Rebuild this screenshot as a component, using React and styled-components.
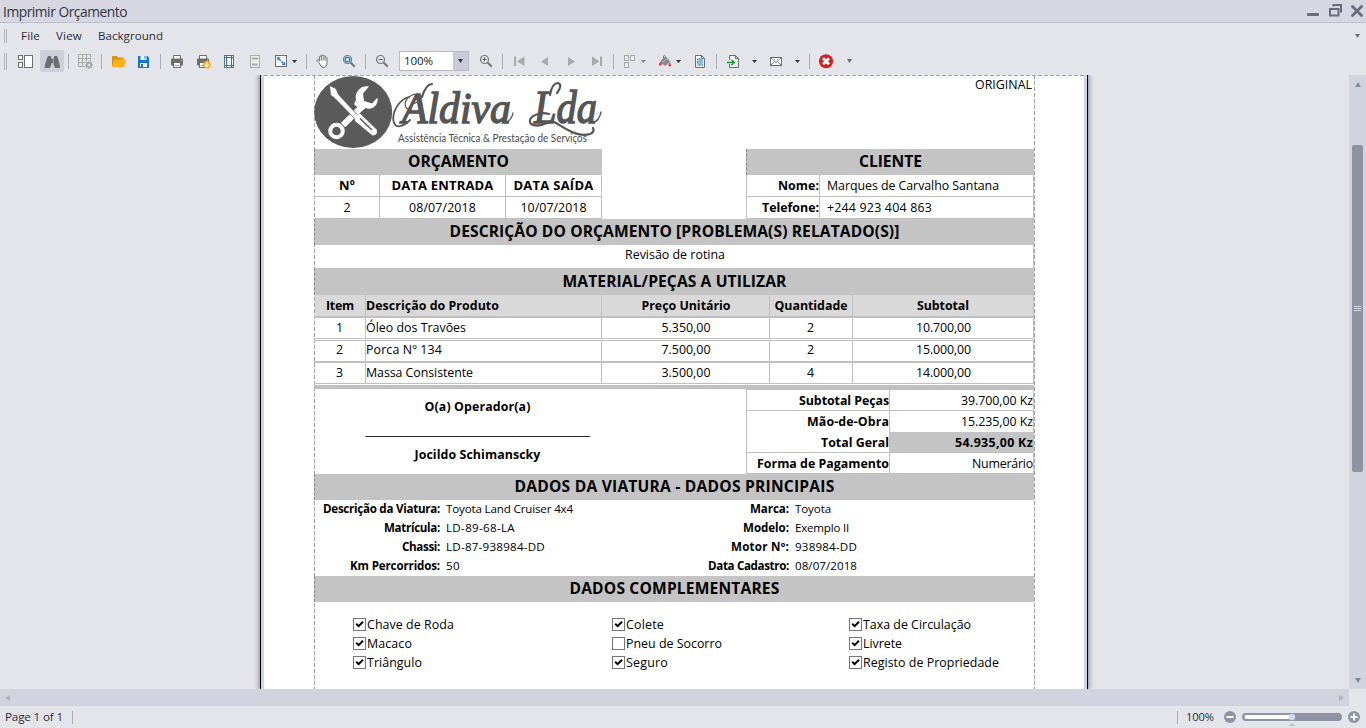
import React, { useLayoutEffect, useRef, useState } from "react";
import styled, { createGlobalStyle } from "styled-components";

const GlobalStyle = createGlobalStyle`
  * { box-sizing: border-box; }
  body { margin: 0; overflow: hidden; font-family: "Open Sans", "Noto Sans", sans-serif; }
  svg { display: block; flex: none; }
`;

const LINE = "#c0c0c0";
const BAND = "#c4c4c4";

/* ---------- text ---------- */

const Label = styled.span`
  display: inline-block;
  flex: none;
  white-space: pre;
  font-family: ${(p) => p.$font || '"Open Sans", "Noto Sans", sans-serif'};
  font-size: ${(p) => p.$size || 12.4}px;
  font-weight: ${(p) => (p.$bold ? 700 : 400)};
  line-height: 16px;
`;

function Text({ w, size, bold, font, children }) {
  const ref = useRef(null);
  const [tracking, setTracking] = useState(0);
  useLayoutEffect(() => {
    if (!w) return;
    const natural = ref.current.getBoundingClientRect().width;
    setTracking((w - natural) / String(children).length);
  }, [w, children]);
  return (
    <Label ref={ref} $size={size} $bold={bold} $font={font} style={{ letterSpacing: tracking }}>
      {children}
    </Label>
  );
}

/* ---------- window frame ---------- */

const Window = styled.div`
  width: 1366px;
  height: 728px;
  display: flex;
  flex-direction: column;
  background: #e4e5ea;
  color: #3a3a48;
  overflow: hidden;
`;

const TitleBar = styled.header`
  height: 23px;
  flex: none;
  display: flex;
  align-items: center;
  justify-content: space-between;
  padding: 0 3px 0 3px;
  background: #d6d7e0;
  border-bottom: 1px solid #bdbfcd;
`;

const TitleText = styled.span`
  display: flex;
  padding-top: 2px;
  color: #33333f;
`;

const MenuBar = styled.nav`
  height: 26px;
  flex: none;
  display: flex;
  align-items: center;
  padding-left: 4px;
  color: #2c2c38;
`;

const MenuItem = styled.span`
  display: flex;
  margin-left: ${(p) => p.$gap}px;
`;

const MenuEnd = styled.span`
  margin: 0 6px 0 auto;
`;

const Toolbar = styled.div`
  height: 26px;
  flex: none;
  display: flex;
  align-items: center;
  padding: 0 0 2px 4px;
`;

const Grip = styled.span`
  width: 3px;
  height: ${(p) => p.$h}px;
  border: solid #b2b4bd;
  border-width: 0 1px;
`;

const Tool = styled.span`
  display: flex;
  flex: none;
  width: ${(p) => p.$w || 16}px;
  height: 22px;
  margin-left: ${(p) => p.$gap || 0}px;
  align-items: center;
  justify-content: center;
  border-radius: 2px;
  background: ${(p) => (p.$active ? "#cdcfdb" : "transparent")};
`;

const Divider = styled.span`
  flex: none;
  width: 1px;
  height: ${(p) => p.$h || 15}px;
  margin-left: ${(p) => p.$gap || 0}px;
  background: #aaacb6;
`;

const ZoomBox = styled.span`
  flex: none;
  width: 70px;
  height: 20px;
  margin-left: 9px;
  display: flex;
  align-items: center;
  background: #fff;
  border: 1px solid #b8bac9;
  padding-left: 4px;
  color: #222;
`;

const ZoomDrop = styled.span`
  margin-left: auto;
  width: 15px;
  height: 18px;
  background: #c9cbd8;
  display: flex;
  align-items: center;
  justify-content: center;
`;

const Body = styled.div`
  height: 614px;
  flex: none;
  display: flex;
`;

const Viewer = styled.main`
  width: 1349px;
  height: 614px;
  display: flex;
  justify-content: flex-start;
  padding-left: 260px;
  overflow: hidden;
`;

const VScroll = styled.div`
  width: 17px;
  height: 614px;
  background: #d1d4de;
  display: flex;
  flex-direction: column;
  align-items: center;
  padding: 7px 0 6px;
`;

const VThumb = styled.div`
  width: 11px;
  height: 327px;
  margin: 58px 0 auto;
  border-radius: 2px;
  background: #8f93a1;
  display: flex;
  flex-direction: column;
  align-items: center;
  justify-content: center;
  gap: 1px;
`;

const ThumbLine = styled.span`
  width: 7px;
  height: 1px;
  background: #d4d6e0;
`;

const HScroll = styled.div`
  width: 1349px;
  height: 17px;
  flex: none;
  background: #d1d4de;
  display: flex;
  align-items: center;
  justify-content: space-between;
  padding: 0 5px;
`;

const StatusBar = styled.footer`
  height: 22px;
  flex: none;
  display: flex;
  align-items: center;
  padding: 0 6px 0 5px;
  color: #2c2c38;
`;

const StatusRight = styled.div`
  margin-left: auto;
  display: flex;
  align-items: center;
`;

/* ---------- report page ---------- */

const Sheet = styled.div`
  width: 828px;
  height: 614px;
  flex: none;
  border: solid #000;
  border-width: 0 1px;
  box-shadow: 0 0 5px 1px rgba(70, 70, 80, 0.6);
  background: #ccd5ee;
  padding: 0 3px;
`;

const dash = "#a3a3a3 0 4px, transparent 4px 6px";

const Paper = styled.div`
  height: 614px;
  background: repeating-linear-gradient(90deg, ${dash}) 0 0 / 820px 1px no-repeat, #fff;
  padding-left: 50px;
`;

const Content = styled.div`
  width: 721px;
  height: 614px;
  color: #000;
  display: flex;
  flex-direction: column;
  background: repeating-linear-gradient(180deg, ${dash}) 0 0 / 1px 100% no-repeat,
    repeating-linear-gradient(180deg, ${dash}) 720px 0 / 1px 100% no-repeat;
`;

const Top = styled.div`
  height: 74px;
  flex: none;
  display: flex;
  justify-content: space-between;
  padding-right: 3px;
`;

const CopyMark = styled.div`
  display: flex;
  align-items: flex-start;
  padding-top: 2px;
`;

const Band = styled.div`
  height: ${(p) => p.$h || 26}px;
  width: ${(p) => p.$w || 720}px;
  flex: none;
  display: flex;
  align-items: center;
  justify-content: center;
  padding-bottom: ${(p) => p.$lift ?? 2}px;
  background: ${BAND};
  border-left: 1px dashed #858585;
`;

const Split = styled.div`
  display: flex;
  flex: none;
  justify-content: space-between;
  width: 720px;
  height: ${(p) => p.$h}px;
`;

const Box = styled.div`
  width: ${(p) => p.$w}px;
`;

const Row = styled.div`
  display: flex;
  flex: none;
  width: ${(p) => p.$w || 720}px;
  height: ${(p) => p.$h || 22}px;
  padding-left: ${(p) => p.$inset ?? 1}px;
  background-clip: content-box;
  background-color: ${(p) => p.$bg || "transparent"};
  border: solid ${LINE};
  border-width: ${(p) => p.$top || 0}px 0 ${(p) => p.$bottom ?? 1}px 0;
`;

const Cell = styled.div`
  width: ${(p) => p.$w}px;
  flex: none;
  display: flex;
  align-items: center;
  justify-content: ${(p) => p.$align || "center"};
  padding: ${(p) => p.$pad || "0"};
  background: ${(p) => p.$bg || "transparent"};
  border-right: 1px solid ${LINE};
`;

const Spacer = styled.div`
  height: ${(p) => p.$h}px;
  flex: none;
`;

const Rule = styled.div`
  height: 4px;
  width: 720px;
  flex: none;
  background: ${LINE};
`;

const Signature = styled.div`
  width: 432px;
  padding: 10px 105px 0 0;
  display: flex;
  flex-direction: column;
  align-items: center;
`;

const SignGap = styled.div`
  display: flex;
  height: 32px;
  padding-top: 7px;
`;

const Totals = styled.div`
  width: 288px;
  border-left: 1px solid ${LINE};
`;

const Vehicle = styled.div`
  display: flex;
  height: 76px;
  flex: none;
`;

const Pairs = styled.div`
  width: ${(p) => p.$w}px;
`;

const Pair = styled.div`
  height: 19px;
  display: flex;
  align-items: center;
  gap: 6px;
  padding-bottom: 2px;
`;

const PairName = styled.div`
  width: ${(p) => p.$w}px;
  display: flex;
  justify-content: flex-end;
`;

const Checks = styled.div`
  display: flex;
  padding: 13px 0 0 39px;
`;

const CheckColumn = styled.div`
  width: ${(p) => p.$w}px;
`;

const CheckRow = styled.div`
  height: 19px;
  display: flex;
  align-items: center;
  gap: 1px;
`;

const CheckBox = styled.span`
  width: 13px;
  height: 13px;
  flex: none;
  border: 1px solid #767676;
  background: #fff;
`;

/* ---------- icons ---------- */

const Icon = ({ children, w = 16, h = 16 }) => (
  <svg width={w} height={h} viewBox={`0 0 ${w} ${h}`} fill="none">
    {children}
  </svg>
);

const Caret = ({ color = "#333", w = 6, h = 4, dir = "down" }) => {
  const d = {
    down: `M0 0H${w}L${w / 2} ${h}Z`,
    up: `M0 ${h}H${w}L${w / 2} 0Z`,
    left: `M${w} 0V${h}L0 ${h / 2}Z`,
    right: `M0 0V${h}L${w} ${h / 2}Z`,
  }[dir];
  return (
    <Icon w={w} h={h}>
      <path d={d} fill={color} />
    </Icon>
  );
};

const G = "#6d6d6d";
const L = "#a9a9a9";

const PanelIcon = () => (
  <Icon>
    <g stroke={G} fill="#fff">
      <rect x="0.5" y="2.5" width="4" height="4" />
      <rect x="0.5" y="9.5" width="4" height="5" />
      <rect x="6.5" y="2.5" width="8" height="12" />
    </g>
  </Icon>
);
const FindIcon = () => (
  <Icon>
    <path d="M4 3H6.5L7.5 5V11L6 15H0.6Q0.6 11 4 3Z M13 3H10.5L9.5 5V11L11 15H16Q16 11 13 3Z M7 6H10V10H7Z" fill={G} />
  </Icon>
);
const GridIcon = () => (
  <Icon>
    <path d="M1.5 1.5H13.5V13.5H1.5ZM1.5 5.5H13.5M1.5 9.5H13.5M5.5 1.5V13.5M9.5 1.5V13.5" stroke={L} />
    <circle cx="12" cy="12" r="4" fill="#e4e5ea" />
    <circle cx="12" cy="12" r="2.1" stroke={L} strokeWidth="1.8" />
    <path d="M12 8V9.6M12 14.4V16M8 12H9.6M14.4 12H16M9.2 9.2L10.3 10.3M13.7 13.7L14.8 14.8M14.8 9.2L13.7 10.3M9.2 14.8L10.3 13.7" stroke={L} strokeWidth="1.3" />
  </Icon>
);
const FolderIcon = () => (
  <Icon>
    <path d="M1 14V3H6L7 4.5H12.5V7H4Z" fill="#dc921a" />
    <path d="M3.5 6.5H15L13 14H1Z" fill="#ffb014" />
  </Icon>
);
const SaveIcon = () => (
  <Icon>
    <path d="M2 3H11.5L13 4.5V15H2Z" fill="#1177d7" />
    <path d="M4.5 3H10.5V7H4.5Z M4 10H11V14H4Z" fill="#fff" />
    <path d="M8.5 3H9.5V6H8.5Z M5 11H7V14H5Z" fill="#1177d7" />
  </Icon>
);
const PrintIcon = ({ quick }) => (
  <Icon>
    <path d="M4.5 6V2.5H11.5V6" stroke={G} fill="#fff" />
    <rect x="2" y="5.5" width="12" height="7" rx="1" fill={G} />
    <rect x="12" y="7" width="1" height="1" fill="#ffb014" />
    <rect x="4.5" y="9.5" width="7" height="5" fill="#fff" stroke={G} />
    <path d="M6 12.5H10" stroke="#9a9a9a" />
    {quick && (
      <g>
        <circle cx="12" cy="11.8" r="3.8" fill="#fdab17" />
        <path d="M12 9.3V13.4M10 11.6L12 13.6L14 11.6" stroke="#fff" strokeWidth="1.2" />
      </g>
    )}
  </Icon>
);
const MarginsIcon = () => (
  <Icon>
    <rect x="3.5" y="2.5" width="9" height="12" fill="#fff" stroke={G} />
    <path d="M5.5 2V15M10.5 2V15M3 4.5H13M3 12.5H13" stroke="#1a78d2" />
  </Icon>
);
const HeaderIcon = () => (
  <Icon>
    <rect x="3.5" y="2.5" width="9" height="12" fill="#ececec" stroke={L} />
    <path d="M5 5.5H11M5 11.5H11" stroke={L} strokeWidth="2" />
  </Icon>
);
const ScaleIcon = () => (
  <Icon>
    <rect x="1.5" y="2.5" width="11" height="11" fill="#fff" stroke={G} />
    <path d="M3.2 4.2H6.8L3.2 7.8Z M11.2 12.2H7.6L11.2 8.6Z" fill="#1a78d2" />
    <path d="M5 6L9.5 10.5" stroke="#1a78d2" strokeWidth="1.6" strokeDasharray="2.4 1.2" />
  </Icon>
);
const HandIcon = () => (
  <Icon>
    <path
      d="M4.4 10.2L2.3 7.9C1.6 7.1 2.6 6.3 3.4 6.9L4.6 8V3.9C4.6 2.8 6.3 2.8 6.3 3.9V2.9C6.3 1.7 8.1 1.7 8.1 2.9V3.2C8.1 2.2 9.9 2.2 9.9 3.4V4.6C9.9 3.7 12 3.8 12 5V9.5C12 12.5 10.8 14.4 8.4 14.4C6.2 14.4 5.4 12.2 4.4 10.2Z"
      fill="#fff"
      stroke={G}
    />
    <path d="M6.3 4V7.8M8.2 3.5V7.6M10 4.5V7.8" stroke={G} strokeWidth="0.9" />
  </Icon>
);
const LensIcon = ({ kind }) => (
  <Icon>
    <circle cx="6.5" cy="6.5" r="4" stroke="#777" strokeWidth="1.2" fill={kind === "fit" ? "#fff" : "none"} />
    <path d="M9.5 9.5L13.8 13.8" stroke="#777" strokeWidth="2" />
    {kind === "fit" && <circle cx="6.5" cy="6.5" r="2.3" stroke="#2a80d0" strokeWidth="1.5" />}
    {kind !== "fit" && <path d="M4.5 6.5H8.5" stroke="#666" />}
    {kind === "in" && <path d="M6.5 4.5V8.5" stroke="#666" />}
  </Icon>
);
const NavIcon = ({ kind }) => (
  <Icon>
    {kind === "first" && <path d="M3 3.5H5V13H3Z M13.5 3.5V13L6 8.2Z" fill={L} />}
    {kind === "prev" && <path d="M11 4V13L4 8.5Z" fill={L} />}
    {kind === "next" && <path d="M5 4V13L12 8.5Z" fill={L} />}
    {kind === "last" && <path d="M11 3.5H13V13H11Z M3 3.5V13L10.5 8.2Z" fill={L} />}
  </Icon>
);
const PagesIcon = () => (
  <Icon>
    <g stroke={L} fill="#ececec">
      <rect x="2.5" y="2.5" width="4" height="5" />
      <rect x="8.5" y="2.5" width="4" height="5" />
      <rect x="2.5" y="9.5" width="4" height="5" />
    </g>
  </Icon>
);
const BucketIcon = () => (
  <Icon>
    <path d="M4.2 7.2L8.8 3L13 8.5L8.5 13L4.5 10.5Z" fill="#8b8b8b" />
    <path d="M8 7.5L6.5 5V3Q7.5 1.5 8.5 3" stroke="#7b7b7b" strokeWidth="1" />
    <path d="M5.5 9L10.5 5.5" stroke="#b9b9b9" strokeWidth="1" />
    <path d="M4.8 7.5L2 10.8V12.5H4.5Z M13 9L11.5 11V13.3H14.3Z" fill="#dd3b36" />
  </Icon>
);
const WatermarkIcon = () => (
  <Icon>
    <path d="M3.5 2.5H9.5L12.5 5.5V14.5H3.5Z" fill="#fff" stroke={G} />
    <path d="M9.5 2.5V5.5H12.5" stroke={G} />
    <path d="M5 5H9V6H11V13H5Z" fill="#9cc6ee" />
    <path d="M5 6L11 12M5 9L9 13M7 5L11 9" stroke="#3385d6" strokeWidth="1" strokeDasharray="1.5 1" />
  </Icon>
);
const ExportIcon = () => (
  <Icon>
    <path d="M4.5 7V2.5H10.5L13.5 5.5V14.5H4.5V11" fill="#f1f2f5" stroke={G} />
    <path d="M10.5 2.5V5.5H13.5" stroke={G} />
    <path d="M2 9.5H9M6.5 6.8L9.2 9.5L6.5 12.2" stroke="#1a9a2c" strokeWidth="1.4" />
  </Icon>
);
const MailIcon = () => (
  <Icon>
    <rect x="2.5" y="4.5" width="11" height="8" fill="#f4f4f7" stroke={G} />
    <path d="M3 5L8 9.3L13 5M3 12L6.4 8.5M13 12L9.6 8.5" stroke="#8b8b8b" />
  </Icon>
);
const StopIcon = () => (
  <Icon>
    <circle cx="8" cy="8.3" r="7" fill="#d3201f" />
    <path d="M5 5.3L11 11.3M11 5.3L5 11.3" stroke="#fff" strokeWidth="2.9" />
  </Icon>
);
const WindowButtons = () => (
  <Icon w={60} h={22}>
    <rect x="4" y="13" width="12" height="3" rx="1" fill="#686b7b" />
    <path d="M30.5 6.5V5H38V11.5H37" stroke="#686b7b" strokeWidth="2" />
    <path d="M27 9H35.5V15.5H27Z" stroke="#686b7b" strokeWidth="2" />
    <path d="M49.5 6.5L58.5 15.5M58.5 6.5L49.5 15.5" stroke="#686b7b" strokeWidth="2.8" strokeLinecap="round" />
  </Icon>
);
const CheckMark = () => (
  <Icon w={11} h={11}>
    <path d="M2.2 4.8L4.6 7.2L9 2.8" stroke="#000" strokeWidth="2" />
  </Icon>
);
const ZoomSlider = () => (
  <Icon w={138} h={22}>
    <circle cx="8" cy="11" r="6" fill="#8f93a6" />
    <path d="M4.5 11H11.5" stroke="#fff" strokeWidth="2" />
    <rect x="20" y="7" width="100" height="8" rx="4" fill="#8f93a6" />
    <path d="M23.5 9H70V13H23.5Q21.5 11 23.5 9Z" fill="#fff" />
    <circle cx="70" cy="11" r="3.2" fill="#cfd9ee" />
    <path d="M66 20H74L70 17Z" fill="#bfc1cb" />
    <circle cx="132" cy="11" r="6" fill="#8f93a6" />
    <path d="M128.5 11H135.5M132 7.5V14.5" stroke="#fff" strokeWidth="2" />
  </Icon>
);

const Logo = () => (
  <svg width="292" height="74" viewBox="0 0 292 74" fill="none">
    <ellipse cx="39.2" cy="37" rx="39" ry="36" fill="#5a5a5a" />
    <path d="M52 28L29 50" stroke="#fff" strokeWidth="6" />
    <path d="M63.5 22.5L58 28.5L50 26L49 18.5L55 11.5C47 10 40 17 42 25L40 29L47 36L51.5 33C58 36 65 30 63.5 22.5Z" fill="#fff" />
    <circle cx="22.5" cy="56" r="6.3" stroke="#fff" strokeWidth="4" />
    <path d="M15.5 10.5L22 13.5L24.5 19.5L45 41.5L41.5 44.5L21 23.5L16.5 20Z" fill="#fff" stroke="#5a5a5a" strokeWidth="0.8" />
    <path d="M40.5 41L46 38.5L62.5 54.5Q64.5 60 58.5 60.5L41 46Z" fill="#fff" />
    <path d="M46 43.5L58 55" stroke="#5a5a5a" strokeWidth="1.5" />
    <g fill="#555" stroke="#555" strokeWidth="1.4" fontFamily="Liberation Serif, serif" fontStyle="italic">
      <text x="88" y="48" fontSize="44" textLength="109" lengthAdjust="spacingAndGlyphs">Aldiva</text>
      <text x="220" y="48" fontSize="46" textLength="63" lengthAdjust="spacingAndGlyphs">Lda</text>
    </g>
    <g stroke="#555" strokeLinecap="round">
      <path d="M98 35C90 35 89 27 95 22C101 17 107 20 105 25C101 30 97 29 99 26" strokeWidth="1.2" />
      <path d="M95 22C84 25 78 38 79.5 46C81 55 90 51 96 45" strokeWidth="1.8" />
      <path d="M108 22Q112 9 118 9M236 20Q238 8 244 8Q249 10 243 18" strokeWidth="2.2" />
      <path d="M235 39C224 36 212 43 217 49C226 54 234 45 240 47C250 52 262 63 276 59Q281 57 279 53" strokeWidth="2.2" />
      <path d="M280 47Q285 46 287 37M193 47Q198 44 199 38" strokeWidth="1.3" />
    </g>
    <text x="84" y="67" fill="#4a4a4a" fontFamily="Lato, sans-serif" fontSize="10.5" textLength="189" lengthAdjust="spacingAndGlyphs">
      Assistência Técnica &amp; Prestação de Serviços
    </text>
  </svg>
);

/* ---------- data ---------- */

const products = [
  { item: "1", name: "Óleo dos Travões", nameW: 100, price: "5.350,00", qty: "2", total: "10.700,00" },
  { item: "2", name: "Porca Nº 134", nameW: 76, price: "7.500,00", qty: "2", total: "15.000,00" },
  { item: "3", name: "Massa Consistente", nameW: 107, price: "3.500,00", qty: "4", total: "14.000,00" },
];
const productLines = [
  { h: 23, top: 2, bottom: 1, lift: 0 },
  { h: 21, top: 1, bottom: 0, lift: 2 },
  { h: 23, top: 2, bottom: 1, lift: 0 },
];

const vehicleLeft = [
  ["Descrição da Viatura:", 117, "Toyota Land Cruiser 4x4", 127],
  ["Matrícula:", 56, "LD-89-68-LA", 69],
  ["Chassi:", 38, "LD-87-938984-DD", 99],
  ["Km Percorridos:", 90, "50", 14],
];
const vehicleRight = [
  ["Marca:", 39, "Toyota", 36],
  ["Modelo:", 46, "Exemplo II", 54],
  ["Motor Nº:", 58, "938984-DD", 62],
  ["Data Cadastro:", 81, "08/07/2018", 62],
];
const checkColumns = [
  [259, [["Chave de Roda", 87, true], ["Macaco", 45, true], ["Triângulo", 55, true]]],
  [237, [["Colete", 38, true], ["Pneu de Socorro", 96, false], ["Seguro", 42, true]]],
  [180, [["Taxa de Circulação", 108, true], ["Livrete", 39, true], ["Registo de Propriedade", 136, true]]],
];

const Heading = ({ children, w, ...band }) => (
  <Band {...band}>
    <Text bold size={15.6} w={w}>{children}</Text>
  </Band>
);

const PairList = ({ rows, w, nameW }) => (
  <Pairs $w={w}>
    {rows.map(([name, nw, value, vw]) => (
      <Pair key={name}>
        <PairName $w={nameW}><Text bold size={11.6} w={nw}>{name}</Text></PairName>
        <Text size={11.6} w={vw}>{value}</Text>
      </Pair>
    ))}
  </Pairs>
);

function Report() {
  return (
    <Content>
      <Top>
        <Logo />
        <CopyMark><Text w={57}>ORIGINAL</Text></CopyMark>
      </Top>

      <Split $h={70}>
        <Box $w={288}>
          <Heading w={101} $w={288}>ORÇAMENTO</Heading>
          <Row $w={288}>
            <Cell $w={65} $pad="0 0 2px"><Text bold size={13} w={16}>Nº</Text></Cell>
            <Cell $w={126} $pad="0 0 2px"><Text bold size={13} w={102}>DATA ENTRADA</Text></Cell>
            <Cell $w={96} $pad="0 0 2px"><Text bold size={13} w={80}>DATA SAÍDA</Text></Cell>
          </Row>
          <Row $w={288}>
            <Cell $w={65}><Text w={7}>2</Text></Cell>
            <Cell $w={126}><Text w={67}>08/07/2018</Text></Cell>
            <Cell $w={96}><Text w={66}>10/07/2018</Text></Cell>
          </Row>
        </Box>
        <Box $w={288}>
          <Heading w={63} $w={288}>CLIENTE</Heading>
          <Row $w={288} $inset={0}>
            <Cell $w={1} />
            <Cell $w={73} $align="flex-end"><Text bold w={41}>Nome:</Text></Cell>
            <Cell $w={214} $align="flex-start" $pad="0 0 0 7px"><Text w={172}>Marques de Carvalho Santana</Text></Cell>
          </Row>
          <Row $w={288} $inset={0}>
            <Cell $w={1} />
            <Cell $w={73} $align="flex-end"><Text bold w={57}>Telefone:</Text></Cell>
            <Cell $w={214} $align="flex-start" $pad="0 0 0 7px"><Text w={105}>+244 923 404 863</Text></Cell>
          </Row>
        </Box>
      </Split>

      <Heading w={450}>DESCRIÇÃO DO ORÇAMENTO [PROBLEMA(S) RELATADO(S)]</Heading>
      <Row $h={23} $bottom={0}>
        <Cell $w={719} $pad="0 0 3px 2px"><Text w={100}>Revisão de rotina</Text></Cell>
      </Row>
      <Heading w={224} $h={27} $lift={1}>MATERIAL/PEÇAS A UTILIZAR</Heading>

      <Row $h={21} $bottom={0} $bg="#d9d9d9">
        <Cell $w={51}><Text bold w={28}>Item</Text></Cell>
        <Cell $w={236} $align="flex-start"><Text bold w={133}>Descrição do Produto</Text></Cell>
        <Cell $w={168} $pad="0 0 0 1px"><Text bold w={89}>Preço Unitário</Text></Cell>
        <Cell $w={83}><Text bold w={73}>Quantidade</Text></Cell>
        <Cell $w={181}><Text bold w={52}>Subtotal</Text></Cell>
      </Row>
      {products.map((p, i) => {
        const { h, top, bottom, lift } = productLines[i];
        const pad = `0 0 ${lift}px`;
        return (
          <React.Fragment key={p.item}>
            {i === 1 && <Spacer $h={1} />}
            <Row $h={h} $top={top} $bottom={bottom}>
              <Cell $w={51} $pad={pad}><Text w={8}>{p.item}</Text></Cell>
              <Cell $w={236} $pad={pad} $align="flex-start"><Text w={p.nameW}>{p.name}</Text></Cell>
              <Cell $w={168} $pad={`${pad} 1px`}><Text w={49}>{p.price}</Text></Cell>
              <Cell $w={83} $pad={pad}><Text w={8}>{p.qty}</Text></Cell>
              <Cell $w={181} $pad={`${pad} 1px`}><Text w={55}>{p.total}</Text></Cell>
            </Row>
          </React.Fragment>
        );
      })}
      <Spacer $h={1} />
      <Rule />

      <Split $h={85}>
        <Signature>
          <Text bold w={106}>O(a) Operador(a)</Text>
          <SignGap>
            <Text w={224} size={13} font='"Liberation Sans", sans-serif'>{"_".repeat(32)}</Text>
          </SignGap>
          <Text bold w={126}>Jocildo Schimanscky</Text>
        </Signature>
        <Totals>
          <Row $w={287} $h={22} $inset={0} $top={1}>
            <Cell $w={143} $pad="2px 0 0" $align="flex-end"><Text bold w={90}>Subtotal Peças</Text></Cell>
            <Cell $w={144} $pad="2px 0 0" $align="flex-end"><Text w={72}>39.700,00 Kz</Text></Cell>
          </Row>
          <Row $w={287} $h={21} $inset={0} $bottom={0}>
            <Cell $w={143} $align="flex-end"><Text bold w={82}>Mão-de-Obra</Text></Cell>
            <Cell $w={144} $align="flex-end"><Text w={72}>15.235,00 Kz</Text></Cell>
          </Row>
          <Row $w={287} $h={21} $inset={0}>
            <Cell $w={143} $pad="2px 0 0" $align="flex-end"><Text bold w={68}>Total Geral</Text></Cell>
            <Cell $w={144} $pad="2px 0 0" $align="flex-end" $bg={BAND}><Text bold w={78}>54.935,00 Kz</Text></Cell>
          </Row>
          <Row $w={287} $h={21} $inset={0}>
            <Cell $w={143} $pad="2px 0 0" $align="flex-end"><Text bold w={132}>Forma de Pagamento</Text></Cell>
            <Cell $w={144} $pad="2px 0 0" $align="flex-end"><Text w={61}>Numerário</Text></Cell>
          </Row>
        </Totals>
      </Split>

      <Heading w={320}>DADOS DA VIATURA - DADOS PRINCIPAIS</Heading>
      <Vehicle>
        <PairList rows={vehicleLeft} w={350} nameW={126} />
        <PairList rows={vehicleRight} w={370} nameW={125} />
      </Vehicle>
      <Heading w={210}>DADOS COMPLEMENTARES</Heading>
      <Checks>
        {checkColumns.map(([w, rows]) => (
          <CheckColumn key={w} $w={w}>
            {rows.map(([name, tw, on]) => (
              <CheckRow key={name}>
                <CheckBox>{on && <CheckMark />}</CheckBox>
                <Text w={tw}>{name}</Text>
              </CheckRow>
            ))}
          </CheckColumn>
        ))}
      </Checks>
    </Content>
  );
}

const ToolStrip = () => (
  <Toolbar>
    <Grip $h={17} />
    <Tool $gap={11}><PanelIcon /></Tool>
    <Tool $gap={6} $w={24} $active><FindIcon /></Tool>
    <Divider $gap={4} />
    <Tool $gap={8}><GridIcon /></Tool>
    <Divider $gap={8} />
    <Tool $gap={9}><FolderIcon /></Tool>
    <Tool $gap={9}><SaveIcon /></Tool>
    <Divider $gap={8} />
    <Tool $gap={8}><PrintIcon /></Tool>
    <Tool $gap={10}><PrintIcon quick /></Tool>
    <Tool $gap={10}><MarginsIcon /></Tool>
    <Tool $gap={10}><HeaderIcon /></Tool>
    <Tool $gap={11}><ScaleIcon /></Tool>
    <Tool $gap={1} $w={6}><Caret w={5} h={3} /></Tool>
    <Divider $gap={9} />
    <Tool $gap={8}><HandIcon /></Tool>
    <Tool $gap={10}><LensIcon kind="fit" /></Tool>
    <Divider $gap={8} />
    <Tool $gap={8}><LensIcon kind="out" /></Tool>
    <ZoomBox>
      <Text w={29} size={11.6}>100%</Text>
      <ZoomDrop><Caret w={5} /></ZoomDrop>
    </ZoomBox>
    <Tool $gap={9}><LensIcon kind="in" /></Tool>
    <Divider $gap={8} />
    <Tool $gap={8}><NavIcon kind="first" /></Tool>
    <Tool $gap={10}><NavIcon kind="prev" /></Tool>
    <Tool $gap={10}><NavIcon kind="next" /></Tool>
    <Tool $gap={10}><NavIcon kind="last" /></Tool>
    <Divider $gap={8} />
    <Tool $gap={8}><PagesIcon /></Tool>
    <Tool $gap={2} $w={6}><Caret w={5} h={3} color="#85858f" /></Tool>
    <Tool $gap={11}><BucketIcon /></Tool>
    <Tool $gap={2} $w={6}><Caret w={5} h={3} /></Tool>
    <Tool $gap={11}><WatermarkIcon /></Tool>
    <Divider $gap={8} />
    <Tool $gap={8}><ExportIcon /></Tool>
    <Tool $gap={10} $w={6}><Caret w={5} h={3} /></Tool>
    <Tool $gap={11}><MailIcon /></Tool>
    <Tool $gap={10} $w={6}><Caret w={5} h={3} /></Tool>
    <Divider $gap={9} />
    <Tool $gap={8}><StopIcon /></Tool>
    <Tool $gap={12} $w={6}><Caret w={5} color="#686b7b" /></Tool>
  </Toolbar>
);

export default function App() {
  return (
    <Window>
      <GlobalStyle />
      <TitleBar>
        <TitleText><Text w={124} size={13.8}>Imprimir Orçamento</Text></TitleText>
        <WindowButtons />
      </TitleBar>
      <MenuBar>
        <Grip $h={14} />
        <MenuItem $gap={14}><Text w={19} size={11.6}>File</Text></MenuItem>
        <MenuItem $gap={16}><Text w={26} size={11.6}>View</Text></MenuItem>
        <MenuItem $gap={16}><Text w={65} size={11.6}>Background</Text></MenuItem>
        <MenuEnd><Caret w={5} color="#686b7b" /></MenuEnd>
      </MenuBar>
      <ToolStrip />
      <Body>
        <Viewer>
          <Sheet>
            <Paper><Report /></Paper>
          </Sheet>
        </Viewer>
        <VScroll>
          <Caret dir="up" w={6} h={5} color="#85889a" />
          <VThumb><ThumbLine /><ThumbLine /><ThumbLine /></VThumb>
          <Caret w={6} h={5} color="#85889a" />
        </VScroll>
      </Body>
      <HScroll>
        <Caret dir="left" w={5} h={6} color="#b1b4bf" />
        <Caret dir="right" w={5} h={6} color="#b1b4bf" />
      </HScroll>
      <StatusBar>
        <Text w={58} size={11.6}>Page 1 of 1</Text>
        <Divider $gap={9} $h={13} />
        <StatusRight>
          <Divider $h={13} />
          <MenuItem $gap={8}><Text w={28} size={11.2}>100%</Text></MenuItem>
          <MenuItem $gap={8}><ZoomSlider /></MenuItem>
        </StatusRight>
      </StatusBar>
    </Window>
  );
}
